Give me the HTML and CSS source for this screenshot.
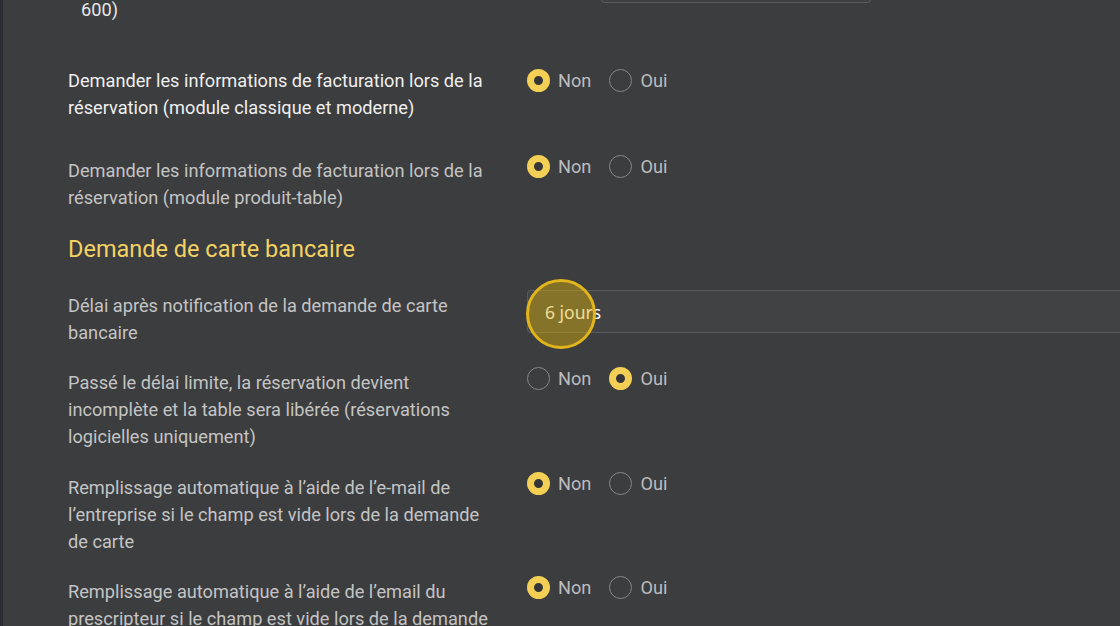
FILE: index.html
```html
<!DOCTYPE html>
<html lang="fr">
<head>
<meta charset="utf-8">
<title>Paramètres</title>
<link rel="stylesheet" href="styles.css">
</head>
<body>
<div class="page">
  <div class="edge"></div>
  <main class="content">
    <div class="prev">
      <div class="prev-label">600)</div>
      <div class="prev-input"></div>
    </div>

    <div class="row row-first">
      <div class="label label-strong">Demander les informations de facturation lors de la réservation (module classique et moderne)</div>
      <div class="radios radios-level">
        <span class="radio checked"></span><span class="opt">Non</span>
        <span class="radio"></span><span class="opt">Oui</span>
      </div>
    </div>

    <div class="row row-second">
      <div class="label">Demander les informations de facturation lors de la réservation (module produit-table)</div>
      <div class="radios">
        <span class="radio checked"></span><span class="opt">Non</span>
        <span class="radio"></span><span class="opt">Oui</span>
      </div>
    </div>

    <h2 class="section">Demande de carte bancaire</h2>

    <div class="row row-input">
      <div class="label">Délai après notification de la demande de carte bancaire</div>
      <div class="field">
        <span class="field-text">6 jours</span>
        <span class="click-mark"></span>
      </div>
    </div>

    <div class="row">
      <div class="label">Passé le délai limite, la réservation devient incomplète et la table sera libérée (réservations logicielles uniquement)</div>
      <div class="radios">
        <span class="radio"></span><span class="opt">Non</span>
        <span class="radio checked"></span><span class="opt">Oui</span>
      </div>
    </div>

    <div class="row row-gap24">
      <div class="label">Remplissage automatique à l’aide de l’e-mail de l’entreprise si le champ est vide lors de la demande de carte</div>
      <div class="radios">
        <span class="radio checked"></span><span class="opt">Non</span>
        <span class="radio"></span><span class="opt">Oui</span>
      </div>
    </div>

    <div class="row">
      <div class="label">Remplissage automatique à l’aide de l’email du prescripteur si le champ est vide lors de la demande de carte</div>
      <div class="radios">
        <span class="radio checked"></span><span class="opt">Non</span>
        <span class="radio"></span><span class="opt">Oui</span>
      </div>
    </div>
  </main>
</div>
</body>
</html>
```

FILE: styles.css
```css
* { box-sizing: border-box; }
html, body {
  margin: 0;
  padding: 0;
  height: 100%;
  overflow: hidden;
  background: #3c3d3f;
}
body {
  font-family: Roboto, "Liberation Sans", sans-serif;
  color: #c3c3c3;
}
.page {
  display: flex;
  height: 626px;
  overflow: hidden;
}
.edge {
  width: 3px;
  flex: none;
  background: #2a2e34;
}
.content {
  flex: 1;
  padding-left: 65px;
  display: flex;
  flex-direction: column;
}

/* partial previous row at top */
.prev {
  display: grid;
  grid-template-columns: 425px 1fr;
  column-gap: 34px;
  margin-top: -40px;
  height: 62px;
  flex: none;
}
.prev-label {
  margin-top: 35.5px;
  padding-left: 13px;
  font-size: 18.2px;
  line-height: 27px;
  color: #e6e6e6;
}
.prev-input {
  margin-left: 73px;
  width: 272px;
  height: 43px;
  border: 1px solid #5c5d60;
  border-radius: 5px;
  background: #3f4042;
}

.row {
  display: grid;
  grid-template-columns: 425px 1fr;
  column-gap: 34px;
  align-items: start;
  margin-top: 23px;
  flex: none;
}
.row-first { margin-top: 44.5px; }
.row-second { margin-top: 36px; }
.row-gap24 { margin-top: 24px; }
.row-input { margin-top: 27.5px; }

.label {
  font-size: 18.2px;
  line-height: 27px;
  color: #c4c4c4;
}
.label-strong { color: #efefef; }

.section {
  margin: 23.5px 0 0;
  font-size: 23.5px;
  line-height: 30px;
  font-weight: 400;
  color: #f3d264;
  flex: none;
}

.radios {
  display: flex;
  align-items: center;
  height: 27px;
  margin-top: -4px;
}
.radios-level { margin-top: 0; }
.radio {
  width: 23px;
  height: 23px;
  border-radius: 50%;
  border: 1.5px solid #85878a;
  flex: none;
}
.radio.checked {
  border: 7px solid #f4cf55;
  background: #343537;
}
.opt {
  margin-left: 8px;
  margin-right: 18px;
  font-size: 18.2px;
  color: #bcbcbd;
}

.field {
  position: relative;
  margin-top: -1.5px;
  height: 43px;
  margin-right: -10px;
  border: 1px solid #5a5b5e;
  border-right: none;
  border-radius: 4px 0 0 4px;
  background: #414244;
  display: flex;
  align-items: center;
  padding-left: 17px;
}
.field-text {
  font-family: "Noto Sans", "Open Sans", sans-serif;
  font-size: 17.5px;
  color: #ffffff;
}
.click-mark {
  position: absolute;
  left: -2px;
  top: -12px;
  width: 70px;
  height: 70px;
  border-radius: 50%;
  border: 3px solid #e3b51c;
  background: rgba(220, 178, 10, 0.44);
}
```
